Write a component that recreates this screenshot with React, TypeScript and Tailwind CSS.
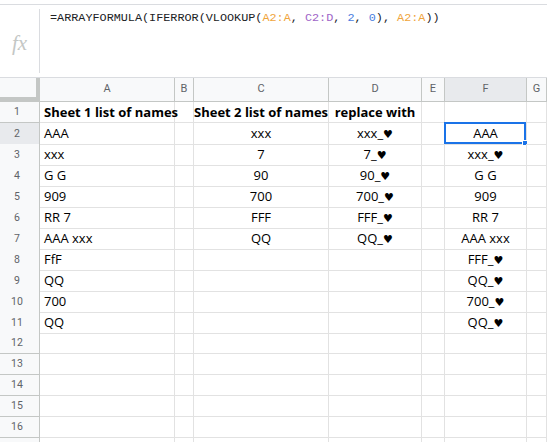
import React from 'react';

const cols = ['A', 'B', 'C', 'D', 'E', 'F', 'G'];

// cells per row: [A, B, C, D, E, F, G]
const data: string[][] = [
  ['Sheet 1 list of names', '', 'Sheet 2 list of names', 'replace with', '', '', ''],
  ['AAA', '', 'xxx', 'xxx_♥', '', 'AAA', ''],
  ['xxx', '', '7', '7_♥', '', 'xxx_♥', ''],
  ['G G', '', '90', '90_♥', '', 'G G', ''],
  ['909', '', '700', '700_♥', '', '909', ''],
  ['RR 7', '', 'FFF', 'FFF_♥', '', 'RR 7', ''],
  ['AAA xxx', '', 'QQ', 'QQ_♥', '', 'AAA xxx', ''],
  ['FfF', '', '', '', '', 'FFF_♥', ''],
  ['QQ', '', '', '', '', 'QQ_♥', ''],
  ['700', '', '', '', '', '700_♥', ''],
  ['QQ', '', '', '', '', 'QQ_♥', ''],
];

const gridCols = 'grid grid-cols-[40px_135px_19px_135px_93px_23px_82px_1fr]';

function FormulaBar() {
  return (
    <div className="mt-[4px] h-[74px] border-y border-[#dadce0] flex bg-white">
      <div className="w-[39px] flex items-start justify-center pt-[28px]">
        <span className="text-[21px] italic text-[#c4c7c5] leading-none" style={{ fontFamily: '"Liberation Serif", serif' }}>
          fx
        </span>
      </div>
      <div className="w-px bg-[#dadce0] my-[4px]" />
      <div
        className="pl-[10px] pt-[5px] text-[11.8px] text-[#202124] leading-[16px] whitespace-nowrap"
        style={{ fontFamily: '"Liberation Mono", monospace' }}
      >
        =ARRAYFORMULA(IFERROR(VLOOKUP(
        <span className="text-[#f0a53c]">A2:A</span>,{' '}
        <span className="text-[#a065c8]">C2:D</span>,{' '}
        <span className="text-[#4a80e0]">2</span>,{' '}
        <span className="text-[#4a80e0]">0</span>),{' '}
        <span className="text-[#f0a53c]">A2:A</span>))
      </div>
    </div>
  );
}

function HeaderRow() {
  return (
    <div className={`${gridCols} h-[24px]`}>
      <div className="relative bg-[#f8f9fa] border-b border-[#c4c7c5]">
        <div className="absolute right-0 top-0 bottom-0 w-[4px] bg-[#c4c7c5]" />
        <div className="absolute left-0 right-0 bottom-0 h-[4px] bg-[#c4c7c5]" />
      </div>
      {cols.map((c) => (
        <div
          key={c}
          className={`flex items-center justify-center border-r border-b border-[#c4c7c5] text-[11px] text-[#5f6368] ${
            c === 'F' ? 'bg-[#e8eaed]' : 'bg-[#f8f9fa]'
          }`}
          style={{ fontFamily: 'Roboto, sans-serif' }}
        >
          {c}
        </div>
      ))}
    </div>
  );
}

function CellText({ v }: { v: string }) {
  if (!v.includes('♥')) return <>{v}</>;
  const [before] = v.split('♥');
  return (
    <>
      {before}
      <span className="text-[11px]">♥</span>
    </>
  );
}

function Row({ n, cells, label }: { n: number; cells: string[]; label: boolean }) {
  const bold = n === 1;
  return (
    <div className={`${gridCols} h-[21px]`}>
      <div
        className={`flex items-center justify-center pr-[5px] border-r border-b border-[#c4c7c5] text-[10.5px] text-[#5f6368] ${
          n === 2 ? 'bg-[#e8eaed]' : 'bg-[#f8f9fa]'
        }`}
        style={{ fontFamily: 'Roboto, sans-serif' }}
      >
        {label ? n : ''}
      </div>
      {cells.map((v, i) => {
        const align = i === 0 ? 'text-left pl-[4px]' : 'text-center';
        const selected = n === 2 && i === 5;
        return (
          <div
            key={i}
            className={`relative border-r border-b border-[#e2e2e2] text-[13px] leading-[20px] text-black whitespace-nowrap ${align} ${
              bold ? 'font-bold' : ''
            }`}
            style={{ fontFamily: '"Open Sans", "DejaVu Sans", sans-serif' }}
          >
            <CellText v={v} />
            {selected && (
              <>
                <div className="absolute -left-px -top-px right-0 bottom-0 border-2 border-[#1a73e8]" />
                <div className="absolute -right-[2px] -bottom-[2px] w-[6px] h-[6px] bg-[#1a73e8] border border-white" />
              </>
            )}
          </div>
        );
      })}
    </div>
  );
}

export default function App() {
  const rows = Array.from({ length: 17 }, (_, i) => data[i] ?? ['', '', '', '', '', '', '']);
  return (
    <div className="w-[547px] h-[442px] overflow-hidden bg-white">
      <FormulaBar />
      <HeaderRow />
      {rows.map((cells, i) => (
        <Row key={i} n={i + 1} cells={cells} label={i < 16} />
      ))}
    </div>
  );
}
